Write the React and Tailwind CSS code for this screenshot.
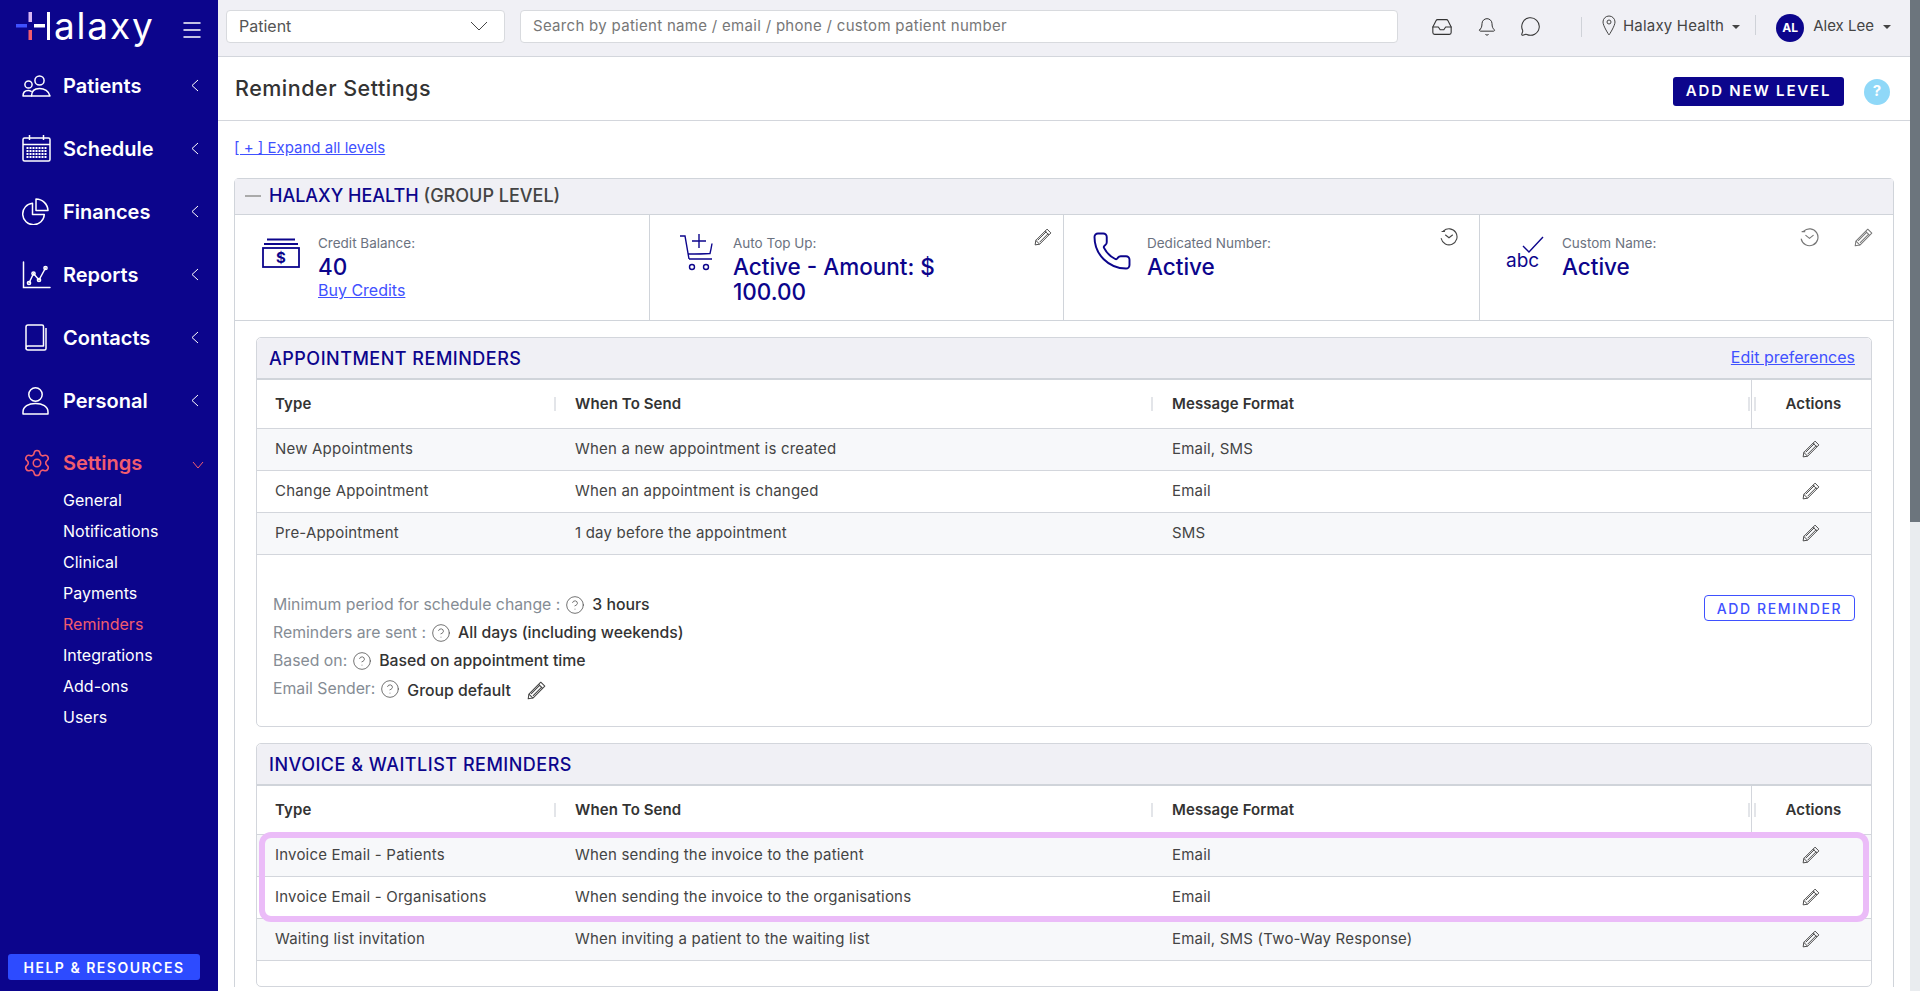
import React from 'react';
import { Bell, CircleHelp, Inbox, Menu, MessageCircle, Phone, Settings } from 'lucide-react';

const NAV_ICONS = {
  patients: (
    <svg width="29" height="22" viewBox="0 0 29 22" fill="none" stroke="currentColor" strokeWidth="1.5" strokeLinejoin="round" strokeLinecap="round">
      <circle cx="17.5" cy="5.5" r="4.6" />
      <circle cx="6.5" cy="9.5" r="3.6" />
      <path d="M9.5 21c0-4.8 3.2-7.5 8-7.500s9.500 2.700 10.500 7.500z" />
      <path d="M1 21c0-3.200 2-5.500 5.200-5.500 1 0 2 .2 3 .8M1 21h8.500" />
    </svg>
  ),
  schedule: (
    <svg width="29" height="27" viewBox="0 0 29 27" fill="none" stroke="currentColor" strokeWidth="1.5">
      <rect x="1" y="3" width="27" height="23" rx="1.500" />
      <path d="M1 9.500h27M7.500 0v5M21.500 0v5" />
      <path d="M4.500 13h20M4.500 16h20M4.500 19h20M4.500 22h20" strokeWidth="2" strokeDasharray="2 1" />
    </svg>
  ),
  finances: (
    <svg width="27" height="27" viewBox="0 0 27 27" fill="none" stroke="currentColor" strokeWidth="1.5" strokeLinejoin="round">
      <path d="M10.500 5.200A10.800 10.800 0 1 0 22.300 16.500H10.500z" />
      <path d="M14 1a12 12 0 0 1 12 11.500H14z" />
    </svg>
  ),
  reports: (
    <svg width="29" height="28" viewBox="0 0 29 28" fill="none" stroke="currentColor" strokeWidth="1.500" strokeLinecap="round">
      <path d="M1.500 1v25.500H28" />
      <path d="M7 22l4.500-9.500L17 19l6.500-12" />
      <circle cx="7" cy="22" r="1.600" />
      <circle cx="11.500" cy="12.500" r="1.600" />
      <circle cx="17" cy="19" r="1.600" />
      <circle cx="23.500" cy="7" r="1.600" />
    </svg>
  ),
  contacts: (
    <svg width="22" height="27" viewBox="0 0 22 27" fill="none" stroke="currentColor" strokeWidth="1.500" strokeLinejoin="round" className="ml-[3px]">
      <path d="M3 1h14a1.500 1.500 0 0 1 1.500 1.500V22H3a2 2 0 0 0-2 2V3a2 2 0 0 1 2-2z" />
      <path d="M1 24a2 2 0 0 0 2 2h16.500a1.500 1.500 0 0 0 1.500-1.500V4" />
    </svg>
  ),
  personal: (
    <svg width="27" height="28" viewBox="0 0 27 28" fill="none" stroke="currentColor" strokeWidth="1.500" strokeLinejoin="round">
      <circle cx="13.500" cy="7.500" r="6.700" />
      <path d="M1 27v-2c0-5.500 5.500-8.500 12.500-8.500S26 19.500 26 25v2z" />
    </svg>
  ),
};

const MAIN_NAV = [
  { label: 'Patients', icon: NAV_ICONS.patients },
  { label: 'Schedule', icon: NAV_ICONS.schedule },
  { label: 'Finances', icon: NAV_ICONS.finances },
  { label: 'Reports', icon: NAV_ICONS.reports },
  { label: 'Contacts', icon: NAV_ICONS.contacts },
  { label: 'Personal', icon: NAV_ICONS.personal },
];

const SUB_NAV = ['General', 'Notifications', 'Clinical', 'Payments', 'Reminders', 'Integrations', 'Add-ons', 'Users'];

const APPOINTMENT_ROWS = [
  ['New Appointments', 'When a new appointment is created', 'Email, SMS'],
  ['Change Appointment', 'When an appointment is changed', 'Email'],
  ['Pre-Appointment', '1 day before the appointment', 'SMS'],
];

const INVOICE_ROWS = [
  ['Invoice Email - Patients', 'When sending the invoice to the patient', 'Email'],
  ['Invoice Email - Organisations', 'When sending the invoice to the organisations', 'Email'],
  ['Waiting list invitation', 'When inviting a patient to the waiting list', 'Email, SMS (Two-Way Response)'],
];

const DETAILS = [
  ['Minimum period for schedule change :', '3 hours'],
  ['Reminders are sent :', 'All days (including weekends)'],
  ['Based on:', 'Based on appointment time'],
];

const PencilIcon = ({ size = 18, className = 'text-[#444]' }) => (
  <svg width={size} height={size} viewBox="0 0 16 16" fill="none" stroke="currentColor" strokeWidth="0.85" strokeLinejoin="round" className={className}>
    <path d="M11.600 1l3.400 3.400L5 14.400 1 15l.6-4z" />
    <path d="M9.800 2.800l3.400 3.400M1.600 11l3.400 3.400M3.400 10.800L11 3.200M5 12.600l7.600-7.600" />
  </svg>
);

const ClockIcon = ({ size = 18, className = 'text-[#444]' }) => (
  <svg width={size} height={size} viewBox="0 0 18 18" fill="none" stroke="currentColor" strokeWidth="1.100" strokeLinecap="round" className={className}>
    <path d="M3.500 3a8 8 0 1 1-2.300 7.500" />
    <path d="M2 3.500h2.500M5.500 7l3.500 2.800L12.500 7" />
  </svg>
);

const HeadCell = ({ label }) => (
  <div className="flex items-center justify-between pr-[19px]">
    <span className="text-[15px] font-semibold tracking-[0.1px] text-[#333]">{label}</span>
    <span className="h-[14px] w-[2px] bg-[#e3e5e9]" />
  </div>
);

const ReminderTable = ({ rows }) => (
  <div>
    <div className="grid h-[49px] grid-cols-[318px_597px_579px_1fr] border-b border-[#d3d6dc]">
      <div className="pl-[18px] flex items-center"><div className="flex-1"><HeadCell label="Type" /></div></div>
      <HeadCell label="When To Send" />
      <div className="flex items-center justify-between">
        <span className="text-[15px] font-semibold tracking-[0.1px] text-[#333]">Message Format</span>
        <span className="mr-[1px] h-[14px] w-[2px] bg-[#e3e5e9]" />
      </div>
      <div className="flex items-center border-l border-[#d3d6dc]">
        <span className="ml-[2px] h-[14px] w-[2px] bg-[#e3e5e9]" />
        <span className="flex-1 text-center text-[15px] font-semibold tracking-[0.1px] text-[#333]">Actions</span>
      </div>
    </div>
    {rows.map((row, i) => (
      <div key={i} className={`grid h-[42px] grid-cols-[318px_597px_579px_1fr] items-center border-b border-[#d3d6dc] text-[15px] tracking-[0.2px] text-[#444] ${i % 2 === 0 ? 'bg-[#f7f8fa]' : 'bg-white'}`}>
        <span className="pl-[18px]">{row[0]}</span>
        <span>{row[1]}</span>
        <span>{row[2]}</span>
        <span className="-mt-[2px] flex justify-center"><PencilIcon /></span>
      </div>
    ))}
  </div>
);

const CardHeader = ({ title, action }) => (
  <div className="flex h-[42px] items-center justify-between rounded-t-[5px] border-b-2 border-[#d0d4da] bg-[#f0f0f5] pl-[12px] pr-[16px]">
    <span className="text-[18px] font-medium tracking-[0.5px] text-[#0c058c]">{title}</span>
    {action && <a className="-mt-[2px] text-[16px] text-[#3f51ff] underline">{action}</a>}
  </div>
);

const InfoCell = ({ icon, iconBox, label, value, link, actions, actionsRight, last }) => (
  <div className={`relative flex h-full ${last ? '' : 'border-r border-[#d0d4da]'}`}>
    <div className={`${iconBox} shrink-0`}>{icon}</div>
    <div className="pt-[20px]">
      <div className="text-[13.500px] leading-[16px] text-[#6b7280]">{label}</div>
      <div className="mt-[3px] w-[260px] text-[22.500px] font-medium leading-[25px] text-[#0c058c]">{value}</div>
      {link && <a className="block text-[16px] leading-[22px] text-[#3f51ff] underline">{link}</a>}
    </div>
    <div className={`absolute top-[13px] flex items-center gap-[35px] ${actionsRight}`}>{actions}</div>
  </div>
);

const HelpIcon = () => <CircleHelp size={20} strokeWidth={0.9} className="ml-[5px] mr-[7px] text-[#444]" />;

const App = () => {
  return (
    <div className="flex h-screen overflow-hidden bg-white font-['Inter',sans-serif] text-[#333]">
      {/* SIDEBAR */}
      <aside className="flex w-[218px] shrink-0 flex-col bg-[#0c058c] text-white">
        <div className="flex h-[54px] items-start pl-[16px] pr-[16px]">
          <div className="mt-[12px] flex items-start">
            <svg width="34" height="28" viewBox="0 0 34 28">
              <rect x="0" y="12" width="11" height="3.500" fill="#3f51ff" />
              <rect x="12.500" y="0" width="3.500" height="10" fill="#d9b8f5" />
              <rect x="12.500" y="18" width="3.500" height="10" fill="#f25c6e" />
              <rect x="18" y="12" width="11" height="3.500" fill="#fff" />
              <rect x="31" y="0" width="3" height="28" fill="#fff" />
            </svg>
            <span className="ml-[4px] -mt-[10px] text-[37px] font-normal leading-[48px] tracking-[1.800px]">alaxy</span>
          </div>
          <Menu size={24} strokeWidth={1.5} className="ml-auto mt-[18px] -mr-[2px]" />
        </div>
        {MAIN_NAV.map((item) => (
          <div key={item.label} className="flex h-[63px] items-center pl-[22px] pr-[19px]">
            <span className="flex w-[41px] shrink-0">{item.icon}</span>
            <span className="text-[20px] font-semibold">{item.label}</span>
            <svg width="8" height="13" viewBox="0 0 8 13" fill="none" stroke="currentColor" strokeWidth="1" className="ml-auto"><path d="M7 1L1 6.500 7 12" /></svg>
          </div>
        ))}
        <div className="flex h-[52px] items-center pl-[22px] pr-[14px] pt-[10px] text-[#f25c6e]">
          <span className="flex w-[41px] shrink-0"><Settings size={30} strokeWidth={1.25} /></span>
          <span className="text-[20px] font-semibold">Settings</span>
          <svg width="12" height="8" viewBox="0 0 12 8" fill="none" stroke="currentColor" strokeWidth="1" className="ml-auto mt-[3px]"><path d="M1 1l5 6 5-6" /></svg>
        </div>
        <div className="pl-[63px]">
          {SUB_NAV.map((item) => (
            <div key={item} className={`flex h-[31px] items-center text-[16px] ${item === 'Reminders' ? 'text-[#f25c6e]' : 'text-white'}`}>{item}</div>
          ))}
        </div>
        <button className="mb-[11px] ml-[8px] mt-auto h-[26px] w-[192px] rounded-[3px] bg-[#2d4bff] text-[14px] font-semibold tracking-[1.500px] text-white">HELP &amp; RESOURCES</button>
      </aside>

      <div className="flex min-w-0 flex-1 flex-col">
        {/* TOP BAR */}
        <header className="flex h-[57px] shrink-0 items-center border-b border-[#d3d6dc] bg-[#f0f0f5] pb-[3px] pl-[8px]">
          <div className="flex h-[33px] w-[279px] items-center justify-between rounded-[4px] border border-[#d8dade] bg-white pb-[1px] pl-[12px] pr-[16px] text-[16px] text-[#555]">
            Patient
            <svg width="18" height="10" viewBox="0 0 18 10" fill="none" stroke="#444" strokeWidth="1"><path d="M1 1l8 8 8-8" /></svg>
          </div>
          <div className="ml-[15px] flex h-[33px] w-[878px] items-center rounded-[4px] border border-[#d8dade] bg-white pb-[1px] pl-[12px] text-[15px] tracking-[0.3px] text-[#777]">
            Search by patient name / email / phone / custom patient number
          </div>
          <Inbox size={22} strokeWidth={1.2} className="ml-[33px]" />
          <Bell size={20} strokeWidth={1.2} className="ml-[24px]" />
          <MessageCircle size={21} strokeWidth={1.2} className="ml-[23px]" />
          <span className="ml-[40px] h-[20px] w-[1px] bg-[#cfd2d8]" />
          <svg width="14" height="21" viewBox="0 0 14 21" fill="none" stroke="#444" strokeWidth="1" className="ml-[20px] -mt-[3px]">
            <path d="M7 1a6 6 0 0 0-6 6c0 4 6 13 6 13s6-9 6-13a6 6 0 0 0-6-6z" />
            <circle cx="7" cy="7" r="2" />
          </svg>
          <span className="ml-[7px] text-[15px] tracking-[0.2px] text-[#444]">Halaxy Health</span>
          <span className="ml-[8px] h-0 w-0 border-x-[4px] border-t-[4px] border-x-transparent border-t-[#444]" />
          <span className="ml-[15px] h-[20px] w-[1px] bg-[#cfd2d8] -mt-[4px]" />
          <span className="ml-[20px] mt-[3px] flex h-[28px] w-[28px] items-center justify-center rounded-full bg-[#0c058c] text-[12px] font-bold text-white">AL</span>
          <span className="ml-[9px] text-[15px] text-[#444]">Alex Lee</span>
          <span className="ml-[9px] h-0 w-0 border-x-[4px] border-t-[4px] border-x-transparent border-t-[#444]" />
        </header>

        {/* PAGE HEADER */}
        <div className="flex h-[64px] shrink-0 items-center justify-between border-b border-[#d3d6dc] pl-[17px] pr-[20px]">
          <h1 className="-mt-[1px] text-[21.500px] font-medium tracking-[0.5px] text-[#333]">Reminder Settings</h1>
          <div className="mt-[6px] flex items-center gap-[20px]">
            <button className="h-[29px] w-[171px] rounded-[3px] bg-[#0c058c] text-[15px] font-semibold tracking-[1.800px] text-white">ADD NEW LEVEL</button>
            <span className="flex h-[26px] w-[26px] items-center justify-center rounded-full bg-[#8fd8f8] text-[15px] font-bold text-white">?</span>
          </div>
        </div>

        {/* CONTENT */}
        <div className="min-h-0 flex-1 overflow-hidden pl-[16px] pr-[16px]">
          <a className="mt-[16px] block text-[15px] leading-[22px] text-[#3f51ff] underline">[ + ] Expand all levels</a>

          <section className="mt-[19px] rounded-t-[5px] border-x border-t border-[#d0d4da]">
            <div className="flex h-[36px] items-center border-b border-[#d0d4da] bg-[#f0f0f5] pb-[2px] pl-[10px]">
              <span className="h-[2px] w-[16px] bg-[#aaa]" />
              <span className="ml-[8px] text-[18px] font-medium text-[#0c058c]">HALAXY HEALTH <span className="text-[#444]">(GROUP LEVEL)</span></span>
            </div>
            <div className="grid h-[106px] grid-cols-[415px_414px_416px_1fr] border-b border-[#d0d4da]">
              <InfoCell
                iconBox="pl-[27px] pt-[23px] w-[83px]"
                icon={
                  <svg width="38" height="30" viewBox="0 0 38 30" fill="none" stroke="#0c058c" strokeWidth="1.800">
                    <path d="M5 1.500h28M2 6h34" />
                    <rect x="1" y="10" width="36" height="19" />
                    <text x="19" y="25" textAnchor="middle" fill="#0c058c" stroke="none" fontSize="15" fontWeight="700">$</text>
                  </svg>
                }
                label="Credit Balance:"
                value="40"
                link="Buy Credits"
              />
              <InfoCell
                iconBox="pl-[30px] pt-[18px] w-[83px]"
                actionsRight="right-[11px]"
                icon={
                  <svg width="33" height="38" viewBox="0 0 33 38" fill="none" stroke="#0c058c" strokeWidth="1.400">
                    <path d="M0 3h5l4 23" />
                    <path d="M8 21c8 0 14 0 22-.5.800-3 1.500-7 2-10" />
                    <path d="M9 26h23M19 1v14M12 8h14" />
                    <circle cx="12" cy="34" r="2.500" />
                    <circle cx="26" cy="34" r="2.500" />
                  </svg>
                }
                label="Auto Top Up:"
                value="Active - Amount: $ 100.00"
                actions={<PencilIcon size={18} />}
              />
              <InfoCell
                iconBox="pl-[27px] pt-[15px] w-[83px]"
                actionsRight="right-[21px]"
                icon={<Phone size={42} strokeWidth={1.100} className="text-[#0c058c]" />}
                label="Dedicated Number:"
                value="Active"
                actions={<ClockIcon />}
              />
              <InfoCell
                last
                iconBox="pl-[26px] pt-[21px] w-[82px]"
                actionsRight="right-[20px]"
                icon={
                  <div className="relative h-[36px] w-[38px]">
                    <svg width="22" height="17" viewBox="0 0 22 17" fill="none" stroke="#0c058c" strokeWidth="1.400" className="absolute right-0 top-0">
                      <path d="M1 10l6 6L21 1" />
                    </svg>
                    <span className="absolute bottom-0 left-0 text-[19px] leading-[22px] text-[#0c058c]">abc</span>
                  </div>
                }
                label="Custom Name:"
                value="Active"
                actions={<><ClockIcon size={19} className="text-[#777]" /><PencilIcon size={19} className="text-[#777]" /></>}
              />
            </div>

            <div className="px-[21px] pt-[16px]">
              {/* APPOINTMENT REMINDERS */}
              <div className="rounded-[5px] border border-[#d3d6dc]">
                <CardHeader title="APPOINTMENT REMINDERS" action="Edit preferences" />
                <ReminderTable rows={APPOINTMENT_ROWS} />
                <div className="flex h-[171px] justify-between pl-[16px] pr-[16px]">
                  <div className="pt-[36px] text-[15.800px]">
                    {DETAILS.map(([label, value]) => (
                      <div key={label} className="flex h-[28px] items-center">
                        <span className="text-[#858c94]">{label}</span>
                        <HelpIcon />
                        <span className="font-[450] text-[#333]">{value}</span>
                      </div>
                    ))}
                    <div className="flex h-[28px] items-center">
                      <span className="text-[#858c94]">Email Sender:</span>
                      <HelpIcon />
                      <span className="mt-[3px] font-[450] text-[#333]">Group default</span>
                      <PencilIcon size={19} className="ml-[16px] mt-[3px] text-[#444]" />
                    </div>
                  </div>
                  <button className="mt-[40px] h-[26px] w-[151px] rounded-[4px] border border-[#3f51ff] text-[14px] font-medium tracking-[1.600px] text-[#3f51ff]">ADD REMINDER</button>
                </div>
              </div>

              {/* INVOICE & WAITLIST REMINDERS */}
              <div className="relative mt-[16px] rounded-[5px] border border-[#d3d6dc] pb-[25px]">
                <CardHeader title="INVOICE & WAITLIST REMINDERS" />
                <ReminderTable rows={INVOICE_ROWS} />
                <div className="pointer-events-none absolute left-[2px] right-[2px] top-[88px] h-[90px] rounded-[12px] border-[6px] border-[#ebbcf8]" />
              </div>
            </div>
          </section>
        </div>
      </div>

      {/* SCROLLBAR */}
      <div className="w-[10px] shrink-0 bg-[#e9ecef]">
        <div className="h-[522px] bg-[#6c757d]" />
      </div>
    </div>
  );
};

export default App;
